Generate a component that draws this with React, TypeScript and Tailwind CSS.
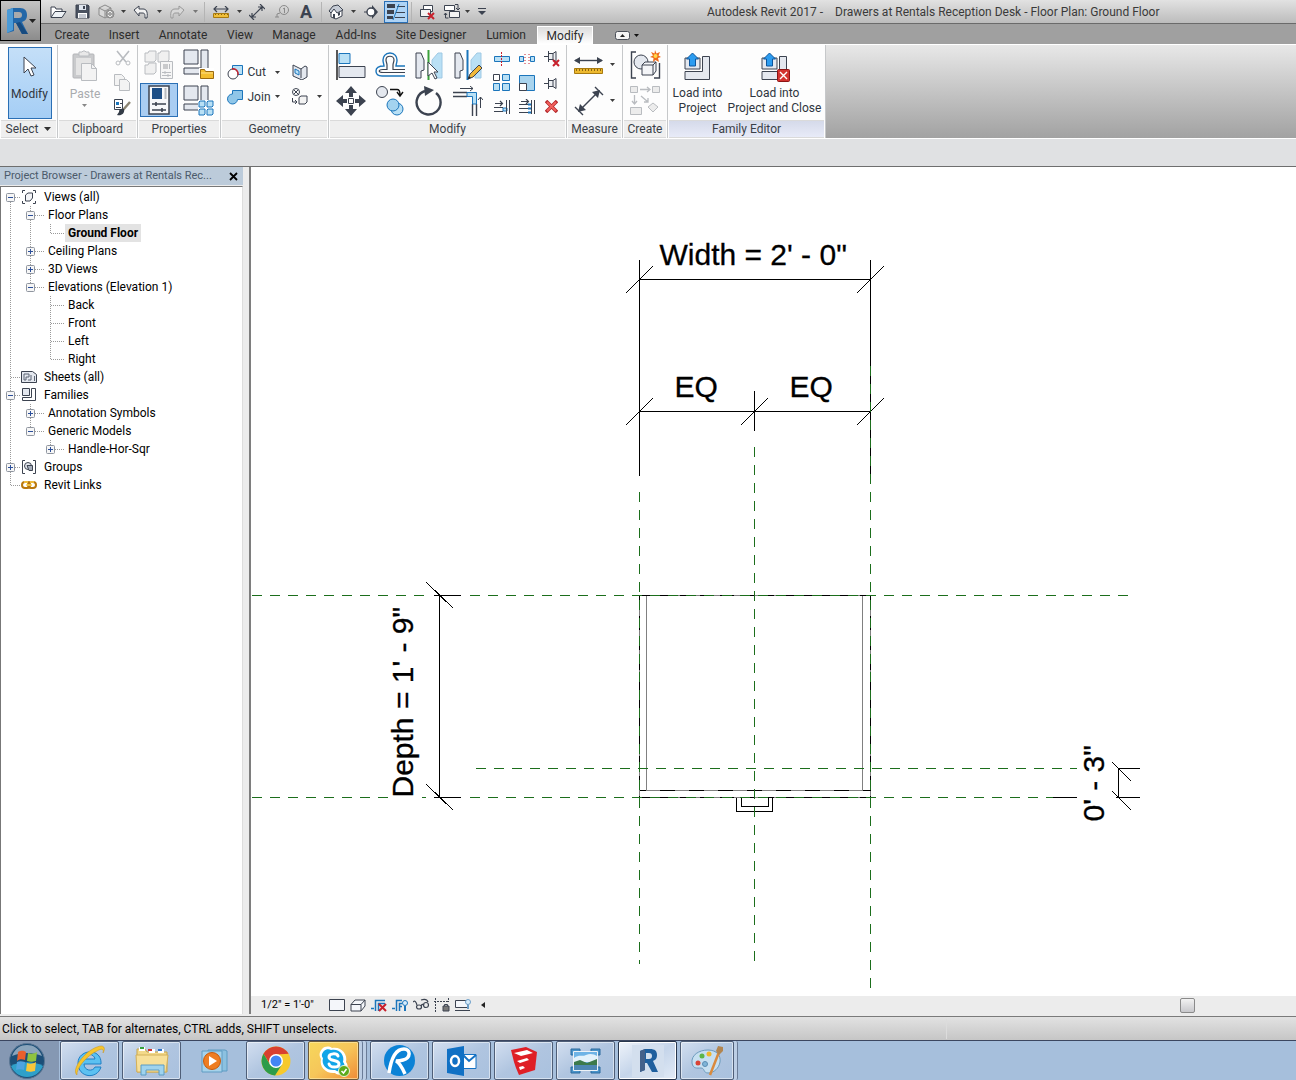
import type { ReactNode } from "react";
import clsx from "clsx";

const INK = "#3c4350";
const BLUE = "#1b75bb";
const SKY = "#b9e0f5";
const PALE = "#e4e8ef";
const GREY = "#b9bcc0";
const RED = "#c8202c";
const GREEN = "#1c6e1c";

interface SvgProps {
  w?: number;
  h?: number;
  children: ReactNode;
}

function Svg({ w = 16, h = 16, children }: SvgProps) {
  return (
    <svg width={w} height={h} viewBox={`0 0 ${w} ${h}`} fill="none" className="block shrink-0" aria-hidden="true">
      {children}
    </svg>
  );
}

function Caret({ color = "#3c3c3c" }: { color?: string }) {
  return (
    <Svg w={5} h={3}>
      <path d="M0 0h5L2.5 3z" fill={color} />
    </Svg>
  );
}

/* ---------- quick access icons ---------- */

const OpenIcon = () => (
  <Svg w={17} h={14}>
    <path d="M1 12V2h4l1 2h6v2" stroke={INK} fill="#fff" />
    <path d="M1 12.5 5 6.5h11l-4 6z" stroke={INK} fill="#eef2f6" />
  </Svg>
);

const SaveIcon = () => (
  <Svg w={15} h={15}>
    <path d="M1 1h12l1 1v12H1z" fill="#4a5260" stroke={INK} />
    <path d="M4 1h7v5H4z" fill="#dfe5ee" />
    <path d="M8 2h2v3H8z" fill={INK} />
    <path d="M3 9h9v5H3z" fill="#fff" />
    <path d="M4 11h7M4 13h7" stroke="#8a93a3" />
  </Svg>
);

const SyncIcon = () => (
  <Svg w={17} h={16}>
    <path d="M1 4 7 1l6 3v7l-6 3-6-3zM1 4l6 3 6-3M7 7v7" stroke="#8b8b8b" fill="#d9d9d9" />
    <circle cx="12" cy="10" r="4" fill="#a4a4a4" stroke="#8b8b8b" />
    <path d="m10 9 2-2 2 2M10 11l2 2 2-2" stroke="#eee" />
  </Svg>
);

const UndoIcon = () => (
  <Svg w={16} h={14}>
    <path d="M1 5 6 1v3h4c3 0 5 2 4 9h-2c0-4 0-5-3-5H6v3z" fill="#f2f2f2" stroke={INK} strokeLinejoin="round" />
  </Svg>
);

const RedoIcon = () => (
  <Svg w={16} h={14}>
    <path d="m15 5-5-4v3H6C3 4 1 6 2 13h2c0-4 0-5 3-5h3v3z" fill="#d8d8d8" stroke="#999" strokeLinejoin="round" />
  </Svg>
);

const RulerIcon = () => (
  <Svg w={16} h={12}>
    <path d="M1 3h14M4 0 1 3l3 3M12 0l3 3-3 3" stroke={INK} strokeWidth="1.200" />
    <path d="M.5 7.500h15v4H.5z" fill="#f0bf3a" stroke="#a87a10" />
    <path d="M2 8.500h13" stroke="#8a6410" strokeDasharray="1 2" />
  </Svg>
);

const BigRulerIcon = () => (
  <Svg w={29} h={18}>
    <path d="M1 4.500h27" stroke={INK} strokeWidth="1.400" />
    <path d="M0 4.500 6 1v7zM29 4.500 23 1v7z" fill={INK} />
    <path d="M.5 12.500h28v5H.5z" fill="#edb92f" stroke="#a87a10" />
    <path d="M2 14h26" stroke="#8a6410" strokeWidth="2" strokeDasharray="1 2" />
  </Svg>
);

const AlignedDimIcon = () => (
  <Svg w={16} h={16}>
    <path d="m3 13 10-10M0 11l5 5M11 0l5 5M3 9v4h4M9 3h4v4" stroke={INK} strokeWidth="1.200" />
  </Svg>
);

const BigAlignedDimIcon = () => (
  <Svg w={30} h={30}>
    <path d="M5 25 25 5" stroke={INK} strokeWidth="1.400" />
    <path d="m4 26 2-8 6 6zM26 4l-2 8-6-6z" fill={INK} />
    <path d="m1 21 8 8M21 1l8 8" stroke={INK} strokeWidth="1.400" />
  </Svg>
);

const TagIcon = () => (
  <Svg w={16} h={14}>
    <circle cx="10" cy="5" r="4.500" stroke="#8a8a8a" />
    <path d="M9 4l1.500-1v5M6 8l-3 1v3M1 12h4" stroke="#8a8a8a" />
  </Svg>
);

const HouseIcon = () => (
  <Svg w={17} h={16}>
    <path d="M3 7v6l5 2 6-3V6l-4-4z" fill="#fff" stroke={INK} />
    <path d="M1 7 5 2l5-1 5 5-6 3-3-4-3 4z" fill="#c6ccd6" stroke={INK} />
    <path d="M5 10h2v4H5zM10 9l2-1v3l-2 1z" fill={INK} />
  </Svg>
);

const SectionIcon = () => (
  <Svg w={15} h={14}>
    <path d="m8 0 6 7-6 7z" fill={INK} />
    <circle cx="7" cy="7" r="4" fill="#fff" stroke={INK} strokeWidth="1.400" />
    <path d="M0 7h3" stroke={INK} />
  </Svg>
);

const ThinLinesIcon = () => (
  <Svg w={18} h={16}>
    <path d="M0 2h8M0 8h7" stroke={INK} strokeWidth="4" />
    <path d="M0 13.500h6" stroke={INK} strokeWidth="3" />
    <path d="M10 2.500h8M9 8.500h9M8 13.500h10" stroke={INK} />
    <path d="M12 0 6 16" stroke={BLUE} />
  </Svg>
);

const CloseViewsIcon = () => (
  <Svg w={17} h={16}>
    <path d="M4.500 1.500h9v6h-9z" fill="#fff" stroke={INK} />
    <path d="M1.500 5.500h10v7h-10z" fill="#f3f3f3" stroke={INK} />
    <path d="m9 9 6 6m0-6-6 6" stroke={RED} strokeWidth="2" />
  </Svg>
);

const SwitchViewsIcon = () => (
  <Svg w={18} h={17}>
    <path d="M1.500 2.500h10v5h-10z" fill="#fff" stroke={INK} />
    <path d="M6.500 8.500h10v6h-10z" fill="#f3f3f3" stroke={INK} />
    <path d="M12 1.500h3v5M13 5l2 2 2-2M2.500 10v5h3M1 12l1.500-2L4 12" stroke={INK} />
  </Svg>
);

const CustomizeIcon = () => (
  <Svg w={8} h={7}>
    <path d="M0 .5h8" stroke={INK} />
    <path d="M0 3h8L4 7z" fill={INK} />
  </Svg>
);

/* ---------- ribbon icons ---------- */

const CursorIcon = () => (
  <Svg w={16} h={22}>
    <path d="M2 1v16l4-4 3 7 3-1-3-7h5z" fill="#fff" stroke={INK} strokeLinejoin="round" />
  </Svg>
);

const PasteIcon = () => (
  <Svg w={26} h={32}>
    <rect x="1" y="4" width="21" height="24" rx="1" fill="#c9cacc" stroke="#b4b5b8" />
    <path d="M4 8h15v17H4z" fill="#e4e4e4" />
    <path d="M7 2h3l1-1h2l1 1h3v4H7z" fill="#e9e9e9" stroke={GREY} />
    <path d="M9.500 13.500h10l5 5v12h-15z" fill="#f3f3f3" stroke={GREY} />
    <path d="M19.500 13.500v5h5" stroke={GREY} />
  </Svg>
);

const ScissorsIcon = () => (
  <Svg>
    <path d="m2 1 9 11M14 1 5 12" stroke={GREY} strokeWidth="1.600" />
    <circle cx="3" cy="13" r="2" stroke={GREY} />
    <circle cx="13" cy="13" r="2" stroke={GREY} />
  </Svg>
);

const CopyClipIcon = () => (
  <Svg w={17} h={17}>
    <path d="M.5.5h7l3 3v8H.5z" fill="#f3f3f3" stroke={GREY} />
    <path d="M5.500 5.500h7l3 3v8h-10z" fill="#f3f3f3" stroke={GREY} />
  </Svg>
);

const BrushIcon = () => (
  <Svg w={17} h={17}>
    <path d="M.5.5h8v10h-8z" fill="#fff" stroke={INK} />
    <path d="M2 3h3v3H2z" fill={BLUE} />
    <path d="M2 8.500h5M6 4.500h2" stroke={INK} />
    <path d="m16 3-7 8" stroke="#8b8472" strokeWidth="2.400" />
    <path d="M3 16c4 1 8-1 7-6-4-1-5 1-5 3z" fill="#333b46" />
  </Svg>
);

const TypePropsIcon = () => (
  <Svg w={32} h={30}>
    <path
      d="M2 3h3l1-2h7v9l-2 2H2zM15 3h2l1-2h8v9l-2 2h-9zM2 15h3l1-2h7v9l-2 2H2z"
      fill="#f0f0f0"
      stroke={GREY}
      strokeLinejoin="round"
    />
    <path d="M17.500 11.500h12v17h-12z" fill="#f6f6f6" stroke={GREY} />
    <path d="M20 14h5v5h-5z" fill="#c9cacc" />
    <path d="M19 22.500h9M19 25.500h9M22 21v3M25 24v3M26.500 14v5" stroke={GREY} />
  </Svg>
);

const PropertiesIcon = () => (
  <Svg w={22} h={30}>
    <path d="M1 1h20v28H1z" fill="#f7f8fa" stroke={INK} strokeWidth="1.500" />
    <path d="M4 3h10v11H4z" fill="#1e4f86" />
    <path d="M17.500 3v11" stroke={GREY} strokeWidth="2" />
    <path d="M4 19h14M4 25h14" stroke={INK} strokeWidth="1.400" />
    <path d="M8 17v4M14 23v4" stroke={INK} strokeWidth="1.600" />
  </Svg>
);

const FamilyShape = () => (
  <>
    <path d="M1 1h14v14H1z" fill={PALE} stroke={INK} />
    <path d="M18 1h7v24H1v-6h17z" fill={PALE} stroke={INK} />
  </>
);

const FamilyCategoryIcon = () => (
  <Svg w={31} h={31}>
    <FamilyShape />
    <path d="M16 19h15v12H16z" fill="#fff" />
    <path d="M17.500 20.500h4l1 2h8v7h-13z" fill="#f3bd2f" stroke="#9b6a10" />
    <path d="M18 24h12" stroke="#fde08a" />
  </Svg>
);

const FamilyTypesIcon = () => (
  <Svg w={31} h={31}>
    <FamilyShape />
    <path d="M15 15h16v16H15z" fill="#fff" />
    <path d="M16 17l1-1h5v5l-1 1h-5zM24 17l1-1h5v5l-1 1h-5zM16 25l1-1h5v5l-1 1h-5zM24 25l1-1h5v5l-1 1h-5z" fill={SKY} stroke={BLUE} />
  </Svg>
);

const CutIcon = () => (
  <Svg w={17} h={16}>
    <path d="M5.500 1.500h10v9h-10z" fill={SKY} stroke={BLUE} />
    <circle cx="6" cy="10" r="5" fill="#fff" stroke={INK} />
    <path d="M5 5a5 5 0 0 1 6 6" stroke={RED} strokeWidth="1.500" />
  </Svg>
);

const JoinIcon = () => (
  <Svg w={17} h={16}>
    <path d="M5.500 1.500h10v9h-5A5 5 0 1 1 5.500 5z" fill="#8fc6e8" stroke={BLUE} />
  </Svg>
);

const WallOpeningIcon = () => (
  <Svg>
    <path d="m1 1 8 4 4-3 2 1v10l-5 3-9-4z" fill={PALE} stroke={INK} />
    <path d="M9 5v9" stroke={INK} />
    <path d="m3 5 4 2v4L3 9z" fill={SKY} stroke={BLUE} />
  </Svg>
);

const PaintOffIcon = () => (
  <Svg w={18} h={17}>
    <circle cx="5" cy="4" r="3.500" fill="#fff" stroke={INK} />
    <path d="m3 2 5 5M7 2 3 6" stroke={INK} />
    <path d="M1.500 10v4h4M4 12l2 2-2 2" stroke={INK} />
    <path d="M8 9.500 10 8h6v6l-2 2H8z" fill="#f3f3f3" stroke={INK} />
  </Svg>
);

const AlignIcon = () => (
  <Svg w={30} h={30}>
    <path d="M1 0v30" stroke="#111" strokeWidth="1.400" />
    <path d="M3 3.500h11v10H3z" fill={SKY} stroke={BLUE} />
    <path d="M3 16.500h26v11H3z" fill={PALE} stroke={INK} />
  </Svg>
);

const OffsetIcon = () => (
  <Svg w={30} h={26}>
    <path
      d="M30 14h-9c0-2 1-3 1-6 0-3-2-7-7-7S8 5 8 8c0 3 1 4 1 6-6 0-8 2-8 5s2 5 6 5h23"
      stroke={BLUE}
      strokeWidth="1.400"
    />
    <path d="M30 17.500H18V13c0-2 1-3 1-5 0-5-8-5-8 0 0 2 1 3 1 5v4.500H8c-5 0-5 3 0 3h22" stroke={INK} strokeWidth="1.200" />
  </Svg>
);

const MirrorPickIcon = () => (
  <Svg w={30} h={30}>
    <path d="M2 3h5l3 7v10l-3 1v7H2z" fill={PALE} stroke={INK} />
    <path d="M28 3h-4l-6 7v10l4 1v7h6z" fill={SKY} stroke="#9fc9e4" />
    <path d="M14.500 0v30" stroke="#3ba13b" strokeWidth="2" />
    <path d="M14 12v14l4-3 3 6 2-1-3-6h4z" fill="#fff" stroke={INK} />
  </Svg>
);

const MirrorDrawIcon = () => (
  <Svg w={30} h={30}>
    <path d="M2 3h5l3 7v10l-3 1v7H2z" fill={PALE} stroke={INK} />
    <path d="M28 3h-4l-6 7v10l4 1v7h6z" fill={SKY} stroke="#9fc9e4" />
    <path d="M14.500 0v30" stroke={BLUE} strokeWidth="2" />
    <path d="m15 29 2-5 9-9 3 3-9 9z" fill="#f0b83a" stroke={INK} />
    <path d="m15 29 1-3 2 2z" fill="#222" />
  </Svg>
);

const MoveIcon = () => (
  <Svg w={30} h={30}>
    <path
      d="m15 0 6 7h-4v4h-4V7H9zM15 30l-6-7h4v-4h4v4h4zM0 15l7-6v4h4v4H7v4zM30 15l-7 6v-4h-4v-4h4V9z"
      fill={INK}
    />
    <path d="M12.500 12.500h5v5h-5z" fill="#fff" stroke={INK} />
  </Svg>
);

const CopyIcon = () => (
  <Svg w={30} h={30}>
    <circle cx="7" cy="6" r="5.500" fill={PALE} stroke={INK} />
    <path d="M15 3.500h7c2 0 3 1 3 5M22 6l3 4 3-4" stroke="#111" strokeWidth="1.400" />
    <circle cx="22" cy="23" r="6" fill={SKY} stroke={BLUE} />
    <circle cx="18" cy="19" r="6" fill="#a3d3ef" stroke={BLUE} />
  </Svg>
);

const RotateIcon = () => (
  <Svg w={30} h={30}>
    <path d="M22 7a12 12 0 1 1-11-2" stroke={INK} strokeWidth="2.400" />
    <path d="m10 0 10 4-9 6z" fill={INK} />
  </Svg>
);

const TrimIcon = () => (
  <Svg w={30} h={30}>
    <path d="M0 6.500h14M0 10.500h14M19.500 18v12M23.500 18v12" stroke={INK} strokeWidth="1.400" />
    <path d="M14 6.500h9.500V18h-4v-7.500H14z" fill={SKY} stroke={BLUE} />
    <path d="M7 2.500h13M17 0l3 2.500L17 5M27.500 22V11M25 14l2.500-3 2.500 3" stroke={INK} />
  </Svg>
);

const SplitIcon = () => (
  <Svg>
    <path d="M.5 5.500h15v5H.5z" fill={SKY} stroke={BLUE} />
    <path d="M7.500 1v14" stroke={RED} strokeDasharray="2 1" />
  </Svg>
);

const SplitGapIcon = () => (
  <Svg>
    <path d="M.5 5.500h4v5h-4zM11.500 5.500h4v5h-4z" fill={SKY} stroke={BLUE} />
    <path d="M6 3v10M10 3v10" stroke={RED} strokeDasharray="1 2" />
  </Svg>
);

const PinShape = () => (
  <path d="M0 8.500h4M4.500 3v11M5 5.500h4l3-2v10l-3-2H5M9 5.500v6" fill="#eef0f3" stroke={INK} />
);

const UnpinIcon = () => (
  <Svg>
    <g transform="translate(0 -3)">
      <PinShape />
    </g>
    <path d="m9 9 6 6m0-6-6 6" stroke={RED} strokeWidth="2" />
  </Svg>
);

const PinIcon = () => (
  <Svg>
    <PinShape />
  </Svg>
);

const ArrayIcon = () => (
  <Svg w={17} h={17}>
    <path d="M.5.5h6v6h-6z" fill="#fff" stroke={INK} />
    <path d="M9.500.5h7v6h-7zM.5 9.500h6v7h-6zM9.500 9.500h7v7h-7z" fill={SKY} stroke={BLUE} />
  </Svg>
);

const ScaleIcon = () => (
  <Svg>
    <path d="M.5.5h15v15H.5z" fill="#a9d4ee" stroke={BLUE} />
    <path d="M.5 8.500h7v7h-7z" fill="#fff" stroke={INK} />
  </Svg>
);

const TrimOneIcon = () => (
  <Svg>
    <path d="M1 4.500h7M6 2l2.500 2.500L6 7M0 8.500h9M0 12.500h9" stroke={INK} strokeWidth="1.200" />
    <path d="M9 9h4v3H9z" fill={SKY} stroke={BLUE} />
    <path d="M12.500 1v14M15.500 1v14" stroke={INK} />
  </Svg>
);

const TrimManyIcon = () => (
  <Svg>
    <path d="M0 5.500h10M0 9.500h9M0 13.500h9M2 2.500h7M7 0l2.500 2.500L7 5" stroke={INK} strokeWidth="1.200" />
    <path d="M9 5.500h4M9 9.500h4M9 13.500h4" stroke={BLUE} strokeWidth="2" />
    <path d="M12.500 1v14M15.500 1v14" stroke={INK} />
  </Svg>
);

const DeleteIcon = () => (
  <Svg w={13} h={13}>
    <path d="m1 1 11 11m0-11L1 12" stroke="#b3262a" strokeWidth="3.500" />
    <path d="m2 2 9 9m0-9-9 9" stroke="#f0605c" strokeWidth="2" />
  </Svg>
);

const CreateSimilarIcon = () => (
  <Svg w={31} h={31}>
    <path d="M6 2H1.500v26H6M24 28h5.500V13" stroke={INK} strokeWidth="1.400" />
    <circle cx="11" cy="12" r="7" fill={PALE} stroke={INK} />
    <path d="M12 15l3-3h11v9l-3 4H12zM12 15h11v10M23 15l3-3" fill="#f4f5f8" stroke={INK} strokeLinejoin="round" />
    <path d="m25 0 1.500 3.500L30 2l-1.500 3.500L31 7l-3 1 1 4-3.500-2-2.500 2 .5-4L20 7l3-1.500L21 2l3.500 1.500z" fill="#ef6b1a" />
    <circle cx="25.500" cy="6" r="2" fill="#ffd84a" />
  </Svg>
);

const CreateGroupIcon = () => (
  <Svg w={30} h={30}>
    <path d="M.5 1.500h7v6h-7zM22.500 1.500h7v6h-7zM.5 22.500h11v7H.5z" fill="#ececec" stroke={GREY} />
    <path d="m23 18 5 4-5 5-5-5z" fill="#ececec" stroke={GREY} />
    <path d="M10 4.500h10M17 2l3 2.500L17 7M4.500 10v9M2 16l2.500 3L7 16M11 11l7 6M14 17h4v-4" stroke={GREY} strokeWidth="1.300" />
  </Svg>
);

const LoadIcon = ({ close = false }: { close?: boolean }) => (
  <Svg w={31} h={30}>
    <path d="M3 6h15v11H3z" fill={PALE} stroke={INK} />
    <path d="M20.500 4.500h7v23H3v-8h17.500z" fill={PALE} stroke={INK} />
    {close && <path d="M20.500 19.500h-1v8" stroke={INK} />}
    <path d="m10.500 1 6 6h-3v7h-6V7h-3z" fill="#2c9cf0" stroke="#0d559c" />
    {close && (
      <>
        <rect x="18.500" y="17.500" width="12" height="12" rx="1" fill="#d3322f" stroke="#8c1414" />
        <path d="m21 20 7 7m0-7-7 7" stroke="#fff" strokeWidth="1.400" />
      </>
    )}
  </Svg>
);

/* ---------- quick access toolbar + title ---------- */

interface QatItem {
  label: string;
  cell: string;
  icon?: ReactNode;
}

const caretCell = "w-2.5 justify-center";

const quickAccess: QatItem[] = [
  { label: "Open", cell: "w-6", icon: <OpenIcon /> },
  { label: "Save", cell: "w-6", icon: <SaveIcon /> },
  { label: "Synchronize", cell: "w-6", icon: <SyncIcon /> },
  { label: "Synchronize options", cell: caretCell, icon: <Caret /> },
  { label: "Undo", cell: "w-[26px]", icon: <UndoIcon /> },
  { label: "Undo history", cell: caretCell, icon: <Caret /> },
  { label: "Redo", cell: "w-[26px]", icon: <RedoIcon /> },
  { label: "Redo history", cell: caretCell, icon: <Caret color="#777" /> },
  { label: "", cell: "w-2" },
  { label: "Measure", cell: "w-[26px]", icon: <RulerIcon /> },
  { label: "Measure options", cell: caretCell, icon: <Caret /> },
  { label: "Aligned dimension", cell: "w-[26px]", icon: <AlignedDimIcon /> },
  { label: "Tag by category", cell: "w-6", icon: <TagIcon /> },
  { label: "Text", cell: "w-6 text-lg font-bold leading-5 text-[#3c4350]", icon: "A" },
  { label: "", cell: "w-1.5" },
  { label: "Default 3D view", cell: "w-6", icon: <HouseIcon /> },
  { label: "3D view options", cell: caretCell, icon: <Caret /> },
  { label: "Section", cell: "w-[26px]", icon: <SectionIcon /> },
  { label: "Thin lines", cell: "w-6 h-[22px] border border-[#2a6fb5] bg-[#aed3f5]", icon: <ThinLinesIcon /> },
  { label: "", cell: "w-1.5" },
  { label: "Close hidden windows", cell: "w-[26px]", icon: <CloseViewsIcon /> },
  { label: "Switch windows", cell: "w-6", icon: <SwitchViewsIcon /> },
  { label: "Switch window list", cell: "w-1.5 justify-center", icon: <Caret /> },
  { label: "Customize quick access toolbar", cell: "w-6", icon: <CustomizeIcon /> },
];

const tabs = [
  { name: "Create", cell: "w-[54px]" },
  { name: "Insert", cell: "w-[50px]" },
  { name: "Annotate", cell: "w-[68px]" },
  { name: "View", cell: "w-[46px]" },
  { name: "Manage", cell: "w-[62px]" },
  { name: "Add-Ins", cell: "w-[62px]" },
  { name: "Site Designer", cell: "w-[88px]" },
  { name: "Lumion", cell: "w-[62px]" },
  { name: "Modify", cell: "w-[56px]", active: true },
];

function Header() {
  return (
    <header className="flex bg-[#a0a0a0]">
      <button
        aria-label="Application menu"
        className="flex h-[41px] w-[41px] shrink-0 items-center justify-center gap-px border border-black bg-linear-to-b from-[#c4c4c4] to-[#8c8c8c]"
      >
        <Svg w={22} h={28}>
          <path d="M1 3 7 1h7c5 0 7 3 7 7s-2 6-5 7l6 12h-6l-6-11H8v8l-7 2z" fill="#2367a8" />
          <path d="M1 3 7 1v22l-6 3z" fill="#4b9bd8" />
          <path d="M8 5h5c2 0 3 1 3 3s-1 3-3 3H8z" fill="#a8aaac" />
          <path d="m10 16 4-1 8 12h-6z" fill="#174b80" />
        </Svg>
        <Svg w={7} h={4}>
          <path d="M0 0h7L3.500 4z" fill="#222" />
        </Svg>
      </button>
      <div className="flex min-w-0 flex-1 flex-col">
        <div className="flex h-6 items-center border-b border-[#6a6a6a] bg-linear-to-b from-[#e2e2e2] to-[#bcbcbc] pl-[5px]">
          {quickAccess.map((item, i) =>
            item.icon ? (
              <button key={i} aria-label={item.label} className={clsx("flex shrink-0 items-center justify-center", item.cell)}>
                {item.icon}
              </button>
            ) : (
              <span key={i} className={clsx("flex h-5 shrink-0 justify-center", item.cell)}>
                <span className="w-px bg-[#b4b4b4]" />
              </span>
            )
          )}
          <h1 className="flex min-w-0 flex-1 gap-3 truncate pl-[213px] text-xs text-[#3a3a3a]">
            <span>Autodesk Revit 2017 -</span>
            <span>Drawers at Rentals Reception Desk - Floor Plan: Ground Floor</span>
          </h1>
        </div>
        <nav className="flex h-5 items-end pl-1">
          {tabs.map((tab) => (
            <button
              key={tab.name}
              className={clsx(
                "h-[18px] shrink-0 whitespace-nowrap text-xs text-[#2c2c2c]",
                tab.cell,
                tab.active && "border-x border-t border-white bg-linear-to-b from-[#dcdcdc] to-white"
              )}
            >
              {tab.name}
            </button>
          ))}
          <button aria-label="Minimize ribbon" className="ml-[22px] flex h-[18px] items-center gap-1">
            <Svg w={15} h={9}>
              <rect x=".5" y=".5" width="14" height="8" rx="2" fill="#f4f4f4" stroke="#4a4f58" />
              <path d="M5 6h5L7.500 3z" fill="#222" />
            </Svg>
            <Caret color="#111" />
          </button>
        </nav>
      </div>
    </header>
  );
}

/* ---------- ribbon ---------- */

interface PanelProps {
  title: ReactNode;
  width: string;
  accent?: boolean;
  children: ReactNode;
}

function Panel({ title, width, accent, children }: PanelProps) {
  return (
    <section className={clsx("flex shrink-0 flex-col border-r border-[#c6c8ca] bg-[#fdfdfd] px-px", width)}>
      <div className="flex h-[75px] items-center justify-center">{children}</div>
      <h2
        className={clsx(
          "flex h-[18px] items-center justify-center gap-1.5 whitespace-nowrap border-y border-[#dadada] text-xs text-[#3a3f48]",
          accent ? "bg-linear-to-b from-[#d5daea] to-[#e8ebf8]" : "bg-[#efefef]"
        )}
      >
        {title}
      </h2>
    </section>
  );
}

interface ToolProps {
  label: string;
  children: ReactNode;
  className?: string;
}

function Tool({ label, children, className }: ToolProps) {
  return (
    <button aria-label={label} className={clsx("flex items-center justify-center", className)}>
      {children}
    </button>
  );
}

function Ribbon() {
  return (
    <div className="flex border-y border-white bg-linear-to-b from-[#e8e8e8] to-[#a2a2a2]">
      <Panel
        width="w-[58px]"
        title={
          <>
            Select
            <Svg w={7} h={4}>
              <path d="M0 0h7L3.500 4z" fill="#333" />
            </Svg>
          </>
        }
      >
        <div className="pl-0.5">
          <button className="flex h-[72px] w-11 flex-col items-center gap-2 border border-[#2a6fb5] bg-linear-to-b from-[#c4dff8] to-[#a5cef5] pt-2 text-xs text-[#2f3540]">
            <CursorIcon />
            Modify
          </button>
        </div>
      </Panel>

      <Panel width="w-20" title="Clipboard">
        <div className="flex gap-3.5 pl-1.5">
          <button className="flex flex-col items-center text-xs text-[#a9abae]">
            <PasteIcon />
            <span className="pb-0.5 pt-1">Paste</span>
            <Caret color="#888" />
          </button>
          <div className="flex flex-col gap-2">
            <Tool label="Cut to clipboard"><ScissorsIcon /></Tool>
            <Tool label="Copy to clipboard"><CopyClipIcon /></Tool>
            <Tool label="Match type properties"><BrushIcon /></Tool>
          </div>
        </div>
      </Panel>

      <Panel width="w-[83px]" title="Properties">
        <div className="grid grid-cols-[38px_32px] gap-x-1 pr-1">
          <Tool label="Type properties" className="h-9"><TypePropsIcon /></Tool>
          <Tool label="Family category" className="h-9"><FamilyCategoryIcon /></Tool>
          <Tool label="Properties" className="h-[34px] border border-[#2a6fb5] bg-[#a9cdf2]"><PropertiesIcon /></Tool>
          <Tool label="Family types" className="h-9"><FamilyTypesIcon /></Tool>
        </div>
      </Panel>

      <Panel width="w-[108px]" title="Geometry">
        <div className="grid grid-cols-[46px_10px_34px_6px] items-center gap-y-2 pt-1 text-xs text-[#2f3540]">
          <button className="flex items-center gap-1"><CutIcon />Cut</button>
          <Tool label="Cut options"><Caret /></Tool>
          <Tool label="Wall opening"><WallOpeningIcon /></Tool>
          <span />
          <button className="flex items-center gap-1"><JoinIcon />Join</button>
          <Tool label="Join options"><Caret /></Tool>
          <Tool label="Remove paint"><PaintOffIcon /></Tool>
          <Tool label="Paint options"><Caret /></Tool>
        </div>
      </Panel>

      <Panel width="w-[238px]" title="Modify">
        <div className="flex items-center gap-0.5">
          <div className="grid grid-cols-[39px_39px_39px_39px] grid-rows-[36px_36px]">
            <Tool label="Align"><AlignIcon /></Tool>
            <Tool label="Offset"><OffsetIcon /></Tool>
            <Tool label="Mirror - pick axis"><MirrorPickIcon /></Tool>
            <Tool label="Mirror - draw axis"><MirrorDrawIcon /></Tool>
            <Tool label="Move"><MoveIcon /></Tool>
            <Tool label="Copy"><CopyIcon /></Tool>
            <Tool label="Rotate"><RotateIcon /></Tool>
            <Tool label="Trim to corner"><TrimIcon /></Tool>
          </div>
          <div className="grid grid-cols-[25px_25px_25px] grid-rows-[24px_24px_24px]">
            <Tool label="Split element"><SplitIcon /></Tool>
            <Tool label="Split with gap"><SplitGapIcon /></Tool>
            <Tool label="Unpin"><UnpinIcon /></Tool>
            <Tool label="Array"><ArrayIcon /></Tool>
            <Tool label="Scale"><ScaleIcon /></Tool>
            <Tool label="Pin"><PinIcon /></Tool>
            <Tool label="Trim single element"><TrimOneIcon /></Tool>
            <Tool label="Trim multiple elements"><TrimManyIcon /></Tool>
            <Tool label="Delete"><DeleteIcon /></Tool>
          </div>
        </div>
      </Panel>

      <Panel width="w-14" title="Measure">
        <div className="grid grid-cols-[36px_12px] grid-rows-[36px_36px]">
          <Tool label="Measure between references"><BigRulerIcon /></Tool>
          <Tool label="Measure options"><Caret /></Tool>
          <Tool label="Aligned dimension"><BigAlignedDimIcon /></Tool>
          <Tool label="Dimension options"><Caret /></Tool>
        </div>
      </Panel>

      <Panel width="w-[45px]" title="Create">
        <div className="flex flex-col gap-1">
          <Tool label="Create similar"><CreateSimilarIcon /></Tool>
          <Tool label="Create group"><CreateGroupIcon /></Tool>
        </div>
      </Panel>

      <Panel width="w-[158px]" title="Family Editor" accent>
        <div className="flex gap-0.5 pt-0.5 text-xs leading-[15px] text-[#2f3540]">
          <button className="flex w-[54px] flex-col items-center gap-1 whitespace-nowrap">
            <LoadIcon />
            <span>Load into<br />Project</span>
          </button>
          <button className="flex w-24 flex-col items-center gap-1 whitespace-nowrap">
            <LoadIcon close />
            <span>Load into<br />Project and Close</span>
          </button>
        </div>
      </Panel>
    </div>
  );
}

/* ---------- project browser ---------- */

// One letter per 20px column:
// "I" line passing through, "T" branch, "L" last branch, " " nothing,
// "m"/"p" open/closed box with the line going on, "M"/"P" the same on a last branch.
interface Node {
  guides: string;
  text: string;
  icon?: ReactNode;
  selected?: boolean;
  first?: boolean;
}

const ViewsIcon = () => (
  <Svg>
    <path d="M4 1.500H1.500V4M12 1.500h2.500V4M4 14.500H1.500V12M12 14.500h2.500V12" stroke={INK} />
    <path d="M4.500 6 7 4h4.500v5L9 12H4.500z" fill="#f4f5f8" stroke={INK} />
  </Svg>
);

const SheetsIcon = () => (
  <Svg>
    <path d="M.5 2.500h11l4 3v8H.5z" fill={PALE} stroke={INK} />
    <path d="M3 5h5v3H5v3H3zM10 6v5H7M13.500 7v5" stroke="#5c6574" />
  </Svg>
);

const FamiliesIcon = () => (
  <Svg>
    <path d="M1.500 1.500h7v7h-7z" fill={PALE} stroke={INK} />
    <path d="M10.500 1.500h4v12h-13v-3h9z" fill="#fff" stroke={INK} />
  </Svg>
);

const GroupsIcon = () => (
  <Svg>
    <path d="M4 1.500H1.500v13H4M12 1.500h2.500v13H12" stroke={INK} />
    <circle cx="7" cy="7" r="3.500" fill={PALE} stroke={INK} />
    <path d="M6 6.500h5.500v5H8z" fill="#a5adbb" stroke={INK} />
  </Svg>
);

const LinksIcon = () => (
  <Svg>
    <rect x="1" y="5" width="8" height="6" rx="3" stroke="#b9770b" strokeWidth="2" />
    <rect x="7" y="5" width="8" height="6" rx="3" stroke="#b9770b" strokeWidth="2" />
    <path d="M3 5h4M9 5h4M5 8h6" stroke="#ffd34d" strokeWidth="1.500" />
  </Svg>
);

const nodes: Node[] = [
  { guides: "m", text: "Views (all)", icon: <ViewsIcon />, first: true },
  { guides: "Im", text: "Floor Plans" },
  { guides: "IIL", text: "Ground Floor", selected: true },
  { guides: "Ip", text: "Ceiling Plans" },
  { guides: "Ip", text: "3D Views" },
  { guides: "IM", text: "Elevations (Elevation 1)" },
  { guides: "I T", text: "Back" },
  { guides: "I T", text: "Front" },
  { guides: "I T", text: "Left" },
  { guides: "I L", text: "Right" },
  { guides: "T", text: "Sheets (all)", icon: <SheetsIcon /> },
  { guides: "m", text: "Families", icon: <FamiliesIcon /> },
  { guides: "Ip", text: "Annotation Symbols" },
  { guides: "IM", text: "Generic Models" },
  { guides: "I P", text: "Handle-Hor-Sqr" },
  { guides: "p", text: "Groups", icon: <GroupsIcon /> },
  { guides: "L", text: "Revit Links", icon: <LinksIcon /> },
];

function Guide({ kind, first, wide }: { kind: string; first?: boolean; wide: boolean }) {
  const box = "mpMP".includes(kind);
  const down = "ITmp".includes(kind);
  const up = kind !== " " && !first;
  const w = wide ? 24 : 20;
  return (
    <Svg w={w} h={18}>
      <g stroke="#9a9a9a" strokeDasharray="1 1" shapeRendering="crispEdges">
        {up && <path d="M9.500 0v10" />}
        {down && <path d="M9.500 10v8" />}
        {kind !== "I" && kind !== " " && <path d={`M10 9.500h${w - 10}`} />}
      </g>
      {box && (
        <>
          <rect x="5.500" y="5.500" width="8" height="8" rx="1" fill="#f6f6f6" stroke="#8f959f" />
          <path d={"pP".includes(kind) ? "M7 9.500h5M9.500 7v5" : "M7 9.500h5"} stroke="#2b4f9b" />
        </>
      )}
    </Svg>
  );
}

function ProjectBrowser() {
  return (
    <aside className="flex w-[243px] shrink-0 flex-col">
      <div className="flex h-[18px] items-center justify-between bg-[#bccbda] pl-1 text-[11px] text-[#4b5a6b]">
        <h2 className="whitespace-nowrap">Project Browser - Drawers at Rentals Rec...</h2>
        <button aria-label="Close project browser" className="px-[5px] py-1">
          <Svg w={9} h={9}>
            <path d="m1 1 7 7m0-7L1 8" stroke="#000" strokeWidth="1.800" />
          </Svg>
        </button>
      </div>
      <ul className="mt-px flex-1 border-l border-t border-r border-l-[#777] border-t-[#777] border-r-[#ddd] bg-white pt-px text-xs text-black">
        {nodes.map((node) => (
          <li key={node.text} className="flex h-[18px] items-center">
            {node.guides.split("").map((kind, i) => (
              <Guide key={i} kind={kind} first={node.first} wide={i > 0 && i === node.guides.length - 1} />
            ))}
            {node.icon}
            <span
              className={clsx(
                "whitespace-nowrap",
                node.icon ? "pl-[7px]" : "px-[3px]",
                node.selected && "bg-[#e3e3e3] font-bold leading-[18px]"
              )}
            >
              {node.text}
            </span>
          </li>
        ))}
      </ul>
    </aside>
  );
}

/* ---------- floor plan drawing ---------- */

// ticks where a dimension line meets its witness lines
const risingTicks = [[639, 279], [870, 279], [639, 411], [754, 411], [870, 411]];
const fallingTicks = [[439, 595], [439, 797]];
const smallTicks = [[1118, 768], [1118, 797]];

function FloorPlan() {
  return (
    <svg
      viewBox="250.500 166.500 1046 829"
      className="block h-[829px] w-[1046px] font-['Liberation_Sans',Arial,sans-serif]"
      role="img"
      aria-label="Floor plan of the drawer unit"
    >
      <g fill="none" stroke="#808080" shapeRendering="crispEdges">
        <path d="M646 595V790M862 595V790M639 790H870M639 797H870M639 595V797M870 595V797M639 595H870" />
      </g>
      <g fill="none" stroke="#000" shapeRendering="crispEdges">
        <path d="M639 790H870" strokeDasharray="15 14" strokeDashoffset="9" />
        <path d="M639 797H870M639 595V797M870 595V797M639 595H870" strokeDasharray="14 6" />
        <path d="M736 797V811H772V797M741 797V806H768V797" />
        <path d="M639 279H870M639 259V475M870 259V475" />
        <path d="M639 411H870M754 390V430" />
        <path d="M439 595V797M433 595H460M433 797H460" />
        <path d="M1118 768V797M1117 768H1139M1115 797H1139M1052 797H1076" />
        {risingTicks.map(([x, y]) => (
          <path key={`${x}-${y}`} d={`M${x - 14} ${y + 14}l27-27`} />
        ))}
        {fallingTicks.map(([x, y]) => (
          <path key={`${x}-${y}`} d={`M${x - 13} ${y - 13}l27 26`} />
        ))}
        {smallTicks.map(([x, y]) => (
          <path key={`${x}-${y}`} d={`M${x - 6} ${y - 6}l19 19`} />
        ))}
      </g>
      <g fill="none" stroke={GREEN} strokeDasharray="10 8" shapeRendering="crispEdges">
        <path d="M251 595H425M469 595H1128" />
        <path d="M475 768H1076" />
        <path d="M251 797H388M421 797H425M469 797H1052" />
        <path d="M639 491V963" />
        <path d="M754 446V963" />
        <path d="M870 365V997" />
      </g>
      <g fontSize="30" fill="#000" stroke="#000" strokeWidth=".3">
        <text x="659" y="264">Width = 2' - 0"</text>
        <text x="674" y="396">EQ</text>
        <text x="789" y="396">EQ</text>
        <text transform="translate(412 797) rotate(-90)">Depth = 1' - 9"</text>
        <text transform="translate(1103 821) rotate(-90)">0' - 3"</text>
      </g>
    </svg>
  );
}

const viewControls = [
  {
    label: "Detail level",
    icon: <path d="M.5 2.500h15v11H.5z" fill="#f4f6fa" stroke={INK} />,
  },
  {
    label: "Visual style",
    icon: <path d="M1 7.500 5 3h10v6l-4 5H1zM1 7.500h10V14M11 7.500 15 3" fill="#f4f6fa" stroke={INK} strokeLinejoin="round" />,
  },
  {
    label: "Crop view off",
    icon: (
      <>
        <path d="M0 11.500h3M4.500 14V3.500H14M7.500 14V6.500H14" stroke={BLUE} strokeWidth="1.500" />
        <path d="m8 7 7 7m0-7-7 7" stroke={RED} strokeWidth="2" />
      </>
    ),
  },
  {
    label: "Show crop region",
    icon: (
      <>
        <path d="M0 11.500h3M4.500 14V3.500H10M7.500 14V6.500H10M7 9.500h3" stroke={BLUE} strokeWidth="1.500" />
        <circle cx="13" cy="6" r="2.500" fill="#d8ecfb" stroke={BLUE} />
        <path d="M13 9v5" stroke={BLUE} strokeWidth="2" />
      </>
    ),
  },
  {
    label: "Temporary hide",
    icon: (
      <>
        <path d="M0 5c2-2 3 0 4 3M8 9c1-2 2-2 3-1M8 3c3-1 6-1 7 2" stroke={INK} strokeWidth="1.200" />
        <ellipse cx="6" cy="10" rx="2.500" ry="2" stroke={INK} strokeWidth="1.200" />
        <ellipse cx="13" cy="8" rx="2.500" ry="2.500" stroke={INK} strokeWidth="1.200" />
      </>
    ),
  },
  {
    label: "Temporary view properties",
    icon: (
      <>
        <path d="M1.500 1v14M0 4.500h15M14.500 1v4" stroke={INK} strokeDasharray="2 1" />
        <path d="M9 9h6v5H9z" fill="#777" stroke={INK} />
        <path d="M10.500 9V7.500h3V9" stroke={INK} />
      </>
    ),
  },
  {
    label: "Reveal constraints",
    icon: (
      <>
        <path d="M.5 3.500h12v7H.5zM0 13.500h15" fill="#f4f6fa" stroke={INK} />
        <circle cx="13" cy="5" r="2.500" fill="#d8ecfb" stroke="#6d9fc8" />
        <path d="M13 8v4" stroke="#6d9fc8" strokeWidth="2" />
      </>
    ),
  },
];

function Canvas() {
  return (
    <main className="flex min-w-0 flex-1 flex-col border-l-2 border-[#7e7e7e] bg-white">
      <div className="flex-1 overflow-hidden">
        <FloorPlan />
      </div>
      <div className="flex h-[18px] items-center bg-[#ececec] pl-2.5 text-black">
        <button className="w-[68px] whitespace-nowrap text-left text-[11px]">1/2" = 1'-0"</button>
        <div className="flex gap-[5px]">
          {viewControls.map((control) => (
            <button key={control.label} aria-label={control.label}>
              <Svg>{control.icon}</Svg>
            </button>
          ))}
        </div>
        <div className="flex min-w-0 flex-1 items-center justify-between pl-2.5 pr-[101px]">
          <button aria-label="Scroll left">
            <Svg w={4} h={6}>
              <path d="M4 0v6L0 3z" fill="#222" />
            </Svg>
          </button>
          <span className="h-[15px] w-[15px] rounded-xs border border-[#8a8a8a] bg-linear-to-b from-[#f2f2f2] to-[#c8c8cc]" />
        </div>
      </div>
    </main>
  );
}

/* ---------- taskbar ---------- */

interface TaskItem {
  label: string;
  frame: string;
  icon: ReactNode;
  stack?: number;
}

const glass = "border border-[#4f5f78] bg-linear-to-br from-[#d3dff0] via-[#b0c5e0] to-[#a9c1de] shadow-[inset_0_0_0_1px_rgba(255,255,255,0.5)]";

const taskItems: TaskItem[] = [
  {
    label: "Internet Explorer",
    frame: clsx("w-[59px]", glass),
    icon: (
      <Svg w={34} h={34}>
        <path d="M28 20H11c0 7 9 8 11 3h6c-4 13-23 11-23-4 0-14 24-16 23 1zM11 15h11c-1-6-10-6-11 0z" fill="#5cc1f1" stroke="#1f7fc4" />
        <path d="M4 31C-2 27 10 8 24 3c7-3 9 1 6 6 1-4-1-5-6-2C13 12 3 25 4 31z" fill="#f6c52d" stroke="#c8931a" strokeWidth=".5" />
      </Svg>
    ),
  },
  {
    label: "File Explorer",
    frame: clsx("w-[59px]", glass),
    icon: (
      <Svg w={34} h={32}>
        <path d="M2 4h8l2 3h20v20H2z" fill="#f3d98a" stroke="#c9a64c" />
        <path d="M4 2h6v4H4zM14 4h6v4h-6zM23 4h6v4h-6z" fill="#fff" />
        <path d="M5 2h4v2H5z" fill="#35a23c" />
        <path d="M13 4h4v2h-4z" fill="#d0312d" />
        <path d="M23 4h4v2h-4z" fill="#2c72c9" />
        <path d="M1 10h32l-2 17H2z" fill="#f7e09a" stroke="#d3b05a" />
        <path d="M6 30V20h23v10h-5v-5H11v5z" fill="#9fd3ee" stroke="#5a9cc4" />
      </Svg>
    ),
  },
  {
    label: "Windows Media Player",
    frame: "w-[59px]",
    icon: (
      <Svg w={28} h={28}>
        <path d="M8 3h17l2 1v20H10z" fill="#8cc1e0" stroke="#5f9cc3" />
        <path d="M2 4h20v21H2z" fill="#a6d2ea" stroke="#5f9cc3" />
        <circle cx="12" cy="14" r="8.500" fill="#ee7d22" stroke="#c85a0c" />
        <path d="m9 9 8 5-8 5z" fill="#fff" />
      </Svg>
    ),
  },
  {
    label: "Google Chrome",
    frame: clsx("w-[59px]", glass),
    icon: (
      <Svg w={30} h={30}>
        <circle cx="15" cy="15" r="14.500" fill="#f7c92c" />
        <path d="M2.500 7.700A14.500 14.500 0 0 1 27.600 7.700L15 8.500 9 18z" fill="#d9402f" />
        <path d="M2.500 7.700A14.500 14.500 0 0 0 14 29.500l7-11-12 0z" fill="#2d9c4a" />
        <circle cx="15" cy="15" r="7" fill="#fff" />
        <circle cx="15" cy="15" r="5.500" fill="#4285f4" />
      </Svg>
    ),
  },
  {
    label: "Skype for Business",
    frame: "w-[51px] border border-[#6b5a3a] bg-linear-to-br from-[#f6d75c] via-[#f6c65a] to-[#ee8b35] shadow-[inset_0_0_0_1px_rgba(255,240,180,0.6)]",
    stack: 2,
    icon: (
      <Svg w={32} h={32}>
        <path d="M4 4c3-3 7-3 10-1 9-2 16 6 14 14 3 4 2 10-3 12-3 1-6 1-8-1C8 29 1 22 3 14 1 11 1 7 4 4z" fill="#fff" />
        <path d="M6 6c2-2 5-2 7-1 8-2 14 5 12 12 3 3 1 8-2 9s-4 0-6-1C9 26 3 20 5 13 3 11 4 8 6 6z" fill="#12a5e8" />
        <path d="M20 11c-1-3-9-3-9 1 0 5 10 2 10 7 0 4-9 4-10 0" stroke="#fff" strokeWidth="3" strokeLinecap="round" />
        <circle cx="26" cy="26" r="5.500" fill="#5cab1c" stroke="#e9f5d8" />
        <path d="m23.500 26 2 2 3-4" stroke="#fff" strokeWidth="1.500" />
      </Svg>
    ),
  },
  {
    label: "Bluebeam Revu",
    frame: clsx("w-[59px]", glass),
    icon: (
      <Svg w={33} h={33}>
        <circle cx="16.500" cy="16.500" r="15.500" fill="#0b82d6" />
        <path d="M6 29C8 15 13 5 21 5c7 0 7 9-1 11-3 1-5 1-7 1 4 2 6 6 9 13" stroke="#fff" strokeWidth="3.500" />
      </Svg>
    ),
  },
  {
    label: "Outlook",
    frame: clsx("w-[59px]", glass),
    icon: (
      <Svg w={31} h={30}>
        <path d="M17 8.500h13v14H17z" fill="#fff" stroke="#1572c4" />
        <path d="m17 9 6 6 7-6" stroke="#1572c4" strokeWidth="2" />
        <path d="M1 3 18 0v30L1 27z" fill="#1070c4" />
        <ellipse cx="9" cy="15" rx="4" ry="5" stroke="#fff" strokeWidth="2.500" />
      </Svg>
    ),
  },
  {
    label: "SketchUp",
    frame: clsx("w-[59px]", glass),
    icon: (
      <Svg w={28} h={30}>
        <path d="M1 4 16 1l11 5-2 18-16 5L6 22l-2-6z" fill="#df1f26" />
        <path d="m4 7 13-3 6 3-12 3zM7 15l10-3 2 2-9 3zM9 21l4-1 2 2-5 2z" fill="#fff" />
      </Svg>
    ),
  },
  {
    label: "Photo Viewer",
    frame: clsx("w-[59px]", glass),
    icon: (
      <Svg w={31} h={26}>
        <path d="M1 1h9v6H1zM30 1h-9v6h9zM1 25h9v-6H1zM30 25h-9v-6h9z" fill="#4a93c9" stroke="#2b6b9e" />
        <path d="M3.500 3.500h24v19h-24z" fill="#6fb4e6" stroke="#eef3f7" />
        <path d="M4 10c5-4 8-1 12-3s8-1 11 1v6H4z" fill="#e3f2fb" />
        <path d="m4 14 6-2 7 3 10-4v6H4z" fill="#3c7a4b" />
        <path d="M4 17h23v5H4z" fill="#4d87b3" />
      </Svg>
    ),
  },
  {
    label: "Autodesk Revit",
    frame: "w-[59px] border border-[#27364d] bg-linear-to-br from-[#eef3fa] via-[#c5d5ea] to-[#e2ebf6] shadow-[inset_0_0_0_1px_#fff]",
    icon: (
      <Svg w={32} h={32}>
        <path d="M0 0h32v32H0z" fill="#d3dfee" />
        <path d="M8 6l5-2h5c5 0 7 2 7 6s-2 5-4 6l5 11h-6l-5-9h-2v7l-5 2z" fill="#1f5f9e" />
        <path d="m8 6 5-2v21l-5 2z" fill="#44618a" />
        <path d="M14 8h3c2 0 3 1 3 3s-1 3-3 3h-3z" fill="#d3dfee" />
      </Svg>
    ),
  },
  {
    label: "Paint",
    frame: clsx("w-[54px]", glass),
    stack: 1,
    icon: (
      <Svg w={34} h={32}>
        <path d="M2 18C1 10 9 5 18 5s13 6 12 12-6 11-12 11c-5 0-3-5-7-5s-8 1-9-5z" fill="#c7e0f1" stroke="#6c9bbd" />
        <circle cx="8" cy="18" r="2.500" fill="#d94436" />
        <circle cx="12" cy="11" r="2.500" fill="#5cb548" />
        <circle cx="19" cy="9" r="2.500" fill="#f0b62c" />
        <circle cx="15" cy="19" r="2.500" fill="#7fb5d8" stroke="#5a8db3" />
        <path d="m29 7-9 23" stroke="#d98a3e" strokeWidth="2.500" />
        <path d="m26 6 2-5 5 1 0 4-4 4z" fill="#b28550" />
      </Svg>
    ),
  },
];

function Taskbar() {
  return (
    <nav aria-label="Taskbar" className="flex h-10 border-t border-[#3b4660] bg-[#a6bfdc]">
      <button aria-label="Start" className="flex w-[59px] items-center justify-center bg-[#8598b3] pr-1.5">
        <Svg w={38} h={38}>
          <circle cx="19" cy="19" r="17.500" fill="#1c4f78" stroke="#5b7693" />
          <path d="M3 24c8-5 24-5 32 0-3 7-9 11-16 11S6 31 3 24z" fill="#2fa0c9" />
          <path d="M4 14C7 6 13 3 19 3s12 3 15 11c-9-4-21-4-30 0z" fill="#8aa4bb" />
          <path d="M10 10c4-2 6-1 8 0l-1 8c-3-1-6-1-8 1z" fill="#e8602c" />
          <path d="M20 11c3 1 6 1 9-1l-1 9c-4 1-6 1-9 0z" fill="#8fc33f" />
          <path d="M9 20c2-1 5-1 8 0l-1 8c-3-1-6-1-8 0z" fill="#4fa3e0" />
          <path d="M19 21c3 1 6 1 9-1l-1 9c-4 1-6 1-9 0z" fill="#f8c73a" />
        </Svg>
      </button>
      <div className="flex gap-[3px] pl-px">
        {taskItems.map((item) => (
          <div key={item.label} className="flex">
            <button
              aria-label={item.label}
              className={clsx("flex h-[39px] items-center justify-center rounded-xs", item.frame)}
            >
              {item.icon}
            </button>
            {Array.from({ length: item.stack ?? 0 }, (_, i) => (
              <span key={i} className="h-[39px] w-1 rounded-r-xs border-r border-[#6a7c98] bg-[#bccee5]" />
            ))}
          </div>
        ))}
      </div>
    </nav>
  );
}

export default function App() {
  return (
    <div className="flex min-h-screen flex-col overflow-hidden bg-[#ececec] font-[Roboto,'Open_Sans',sans-serif]">
      <Header />
      <Ribbon />
      <div className="h-7 border-b border-[#6e6e6e] bg-[#e0e1e3]" />
      <div className="flex flex-1 gap-1.5 pb-0.5">
        <ProjectBrowser />
        <Canvas />
      </div>
      <footer className="flex h-6 items-center border-t border-[#7a7a7a] bg-linear-to-b from-[#e2e2e2] to-[#c6c6c6] pl-0.5 text-xs text-black">
        <p className="w-[73%] border-r border-[#dcdcdc] leading-5">
          Click to select, TAB for alternates, CTRL adds, SHIFT unselects.
        </p>
      </footer>
      <Taskbar />
    </div>
  );
}
